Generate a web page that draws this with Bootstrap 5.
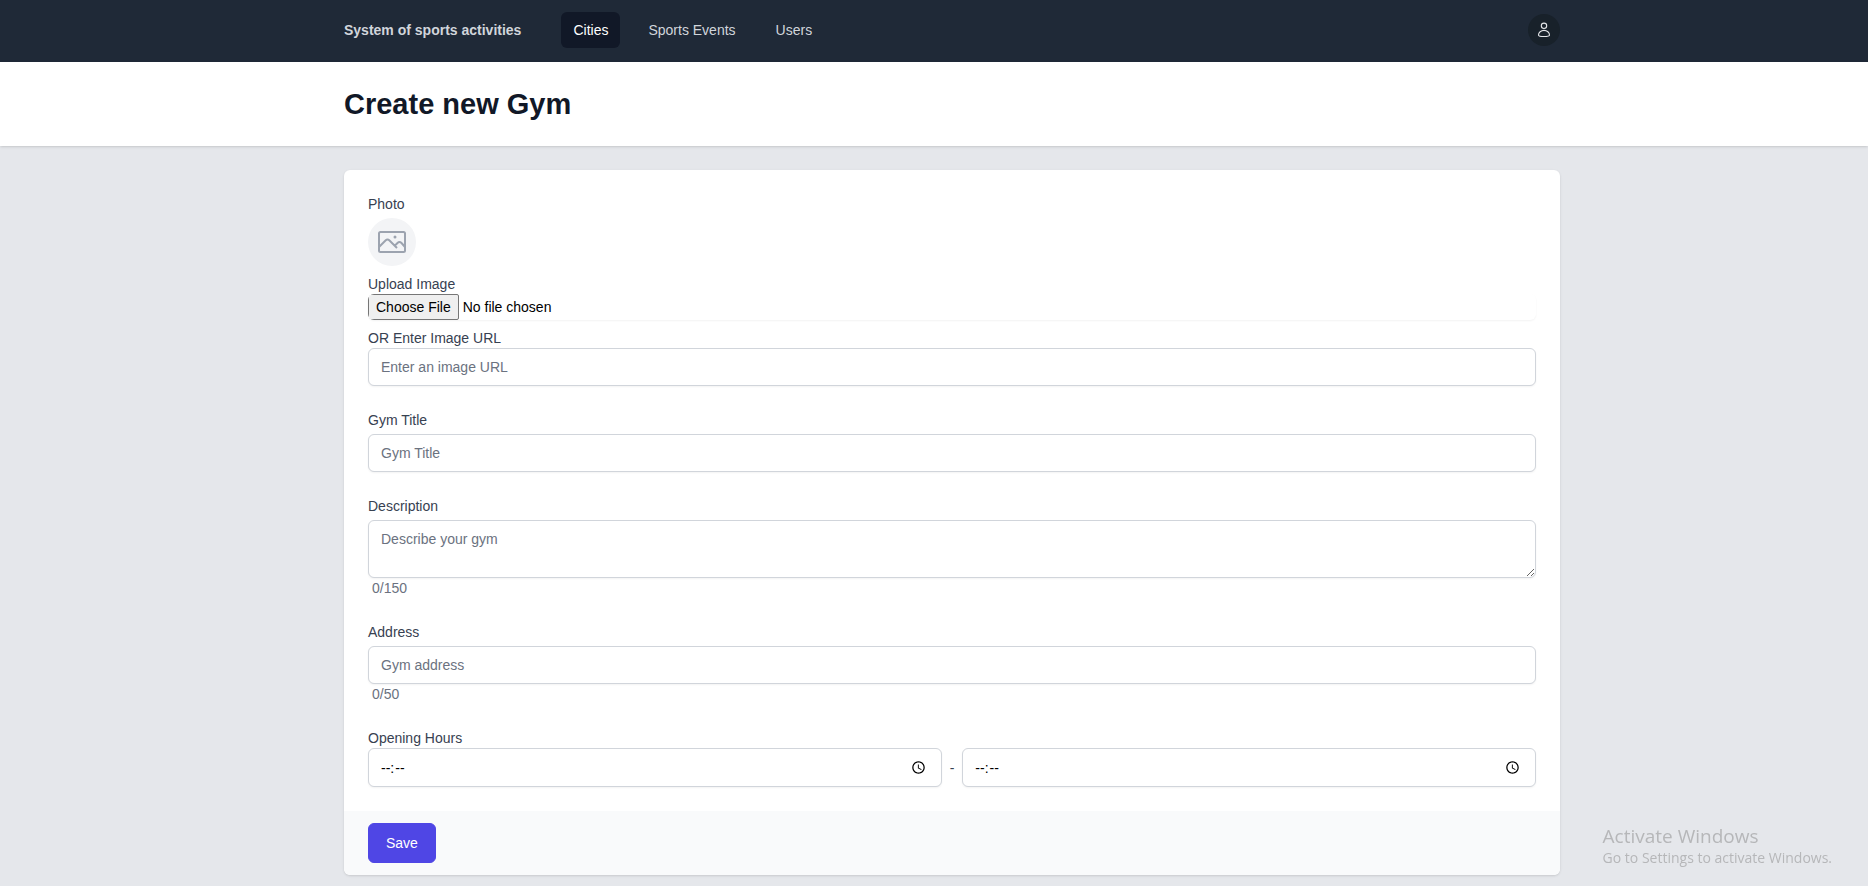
<!DOCTYPE html>
<html lang="en-GB">
<head>
<meta charset="utf-8">
<meta name="viewport" content="width=device-width, initial-scale=1">
<title>Create new Gym</title>
<link href="https://cdn.jsdelivr.net/npm/bootstrap@5.3.0/dist/css/bootstrap.min.css" rel="stylesheet">
<style>
  body { background: #e5e7eb; color: #374151; font: 14px/20px "Liberation Sans", Arial, sans-serif; }
  .shell { padding-left: 36px; }
  .shell-inner { max-width: 1216px; margin: 0 auto; }
  .topbar { background: #1f2937; padding-top: 12px; padding-bottom: 14px; }
  .topbar .navbar-brand { font-size: 14px; font-weight: 700; line-height: 20px; color: #d1d5db; margin-right: 40px; padding: 0; }
  .topbar .nav { gap: 16px; }
  .topbar .nav-link { color: #d1d5db; padding: 8px 12px; border-radius: 6px; line-height: 20px; }
  .topbar .nav-link.active { background: #111827; color: #fff; }
  .avatar { width: 32px; height: 32px; background: #18212a; color: #e3e5e8; }
  .soft-shadow { box-shadow: 0 1px 3px rgba(0,0,0,.1), 0 1px 2px -1px rgba(0,0,0,.1); }
  .page-head { background: #fff; padding-top: 24px; padding-bottom: 24px; position: relative; }
  .page-head h1 { font-size: 29px; line-height: 36px; font-weight: 700; color: #111827; margin: 0; }
  .form-panel { border: 0; border-radius: 6px; overflow: hidden; color: #374151; }
  .form-panel .card-body { padding: 24px; }
  .form-panel .card-footer { background: #f9fafb; border: 0; padding: 12px 24px; }
  .form-label { display: block; margin-bottom: 4px; }
  .form-panel .form-control { font-size: 14px; line-height: 20px; padding: 8px 12px; border-color: #d1d5db; border-radius: 6px; color: #000; box-shadow: 0 1px 2px rgba(0,0,0,.05); min-height: 0; }
  .form-panel .form-control::placeholder { color: #6b7280; }
  .form-panel textarea.form-control { height: 58px; resize: vertical; }
  .form-panel input[type=time] { height: 39px; }
  input[type=time]::-webkit-datetime-edit-ampm-field { display: none; }
  .field-gap { margin-bottom: 24px; }
  .counter { padding-left: 4px; color: #6b7280; }
  .photo-ring { width: 48px; height: 48px; background: #f3f4f6; color: #9ca3af; margin-bottom: 8px; }
  .file-pick { display: block; width: 100%; height: 26px; margin-bottom: 8px; border-radius: 6px; color: #000; box-shadow: 0 1px 2px rgba(0,0,0,.05); overflow: hidden; }
  .file-pick::file-selector-button { appearance: none; -webkit-appearance: none; font: inherit; color: #000; background: #efefef; border: 1px solid #767676; border-radius: 2px; padding: 2px 7px; margin: 0 4px 0 0; height: 26px; }
  .btn-save { background: #4f46e5; border-color: #4f46e5; color: #fff; font-size: 14px; line-height: 20px; padding: 9px 17px; border-radius: 6px; }
  .btn-save:hover { background: #4338ca; color: #fff; }
  .os-notice { position: fixed; right: 36px; bottom: 18px; color: #b6b7b9; font-family: "Open Sans", sans-serif; pointer-events: none; }
  .os-notice p { margin: 0; }
  .os-title { font-size: 19px; line-height: 24px; }
  .os-text { font-size: 14px; line-height: 20px; }
</style>
</head>
<body>
<nav class="topbar shell">
  <div class="shell-inner d-flex align-items-center">
    <a class="navbar-brand" href="#">System of sports activities</a>
    <ul class="nav">
      <li class="nav-item"><a class="nav-link active" aria-current="page" href="#">Cities</a></li>
      <li class="nav-item"><a class="nav-link" href="#">Sports Events</a></li>
      <li class="nav-item"><a class="nav-link" href="#">Users</a></li>
    </ul>
    <button type="button" class="avatar btn border-0 rounded-circle p-0 ms-auto d-flex align-items-center justify-content-center" aria-label="Account">
      <svg width="14" height="16" viewBox="0 0 14 16" fill="none" stroke="currentColor" stroke-width="1.1"><circle cx="7" cy="3.800" r="2.700"/><path d="M7 8.400c3 0 5.500 2.200 5.500 4.500 0 1.100-1.600 1.600-5.500 1.600s-5.500-.5-5.500-1.600c0-2.300 2.500-4.500 5.500-4.500z"/></svg>
    </button>
  </div>
</nav>
<header class="page-head shell soft-shadow">
  <div class="shell-inner"><h1>Create new Gym</h1></div>
</header>
<main class="shell py-4">
  <form class="shell-inner" onsubmit="return false">
    <div class="card form-panel soft-shadow mb-2">
      <div class="card-body">
        <div class="field-gap">
          <div class="mb-1">Photo</div>
          <div class="photo-ring rounded-circle d-flex align-items-center justify-content-center">
            <svg width="28" height="22" viewBox="0 0 28 22" fill="none" stroke="currentColor" stroke-width="2"><rect x="1" y="1" width="26" height="20" rx="1.500"/><path d="M1 16l6.500-6.500q2-2 4 0L19 17M17 14.500l2.500-2.500q2-2 4 0L27 16"/><circle cx="17" cy="6" r="1.500" fill="currentColor" stroke="none"/></svg>
          </div>
          <label class="d-block" for="photo-file">Upload Image</label>
          <input class="file-pick" type="file" id="photo-file">
          <label class="d-block" for="photo-url">OR Enter Image URL</label>
          <input class="form-control" type="text" id="photo-url" placeholder="Enter an image URL">
        </div>
        <div class="field-gap">
          <label class="form-label" for="gym-title">Gym Title</label>
          <input class="form-control" type="text" id="gym-title" placeholder="Gym Title">
        </div>
        <div class="field-gap">
          <label class="form-label" for="gym-desc">Description</label>
          <textarea class="form-control" id="gym-desc" maxlength="150" placeholder="Describe your gym"></textarea>
          <div class="counter">0/150</div>
        </div>
        <div class="field-gap">
          <label class="form-label" for="gym-address">Address</label>
          <input class="form-control" type="text" id="gym-address" maxlength="50" placeholder="Gym address">
          <div class="counter">0/50</div>
        </div>
        <label class="d-block" for="opens">Opening Hours</label>
        <div class="d-flex align-items-center gap-2">
          <input class="form-control" type="time" id="opens">
          <span>-</span>
          <input class="form-control" type="time" id="closes" aria-label="Closing time">
        </div>
      </div>
      <div class="card-footer">
        <button type="submit" class="btn btn-save">Save</button>
      </div>
    </div>
  </form>
</main>
<aside class="os-notice">
  <p class="os-title">Activate Windows</p>
  <p class="os-text">Go to Settings to activate Windows.</p>
</aside>
<script src="https://cdn.jsdelivr.net/npm/bootstrap@5.3.0/dist/js/bootstrap.bundle.min.js"></script>
</body>
</html>
